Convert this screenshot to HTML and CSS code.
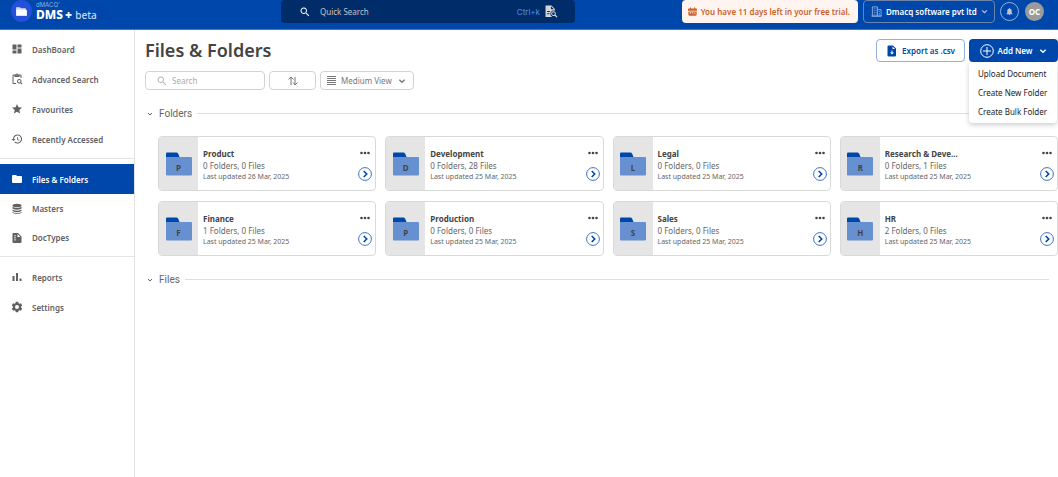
FILE: index.html
```html
<!DOCTYPE html>
<html lang="en">
<head>
  <meta charset="UTF-8">
  <meta name="viewport" content="width=device-width, initial-scale=1.0">
  <title>DMS+ | Files &amp; Folders</title>
  <link rel="stylesheet" href="styles.css">
</head>
<body>
  <svg class="sprite" aria-hidden="true">
    <symbol id="i-search" viewBox="0 0 24 24"><path d="M15.5 14h-.8l-.3-.3A6.5 6.5 0 1 0 13.700 14.400l.3.3v.8l5 5 1.500-1.500zm-6 0a4.500 4.500 0 1 1 0-9 4.500 4.500 0 0 1 0 9z"/></symbol>
    <symbol id="i-folder" viewBox="0 0 24 24"><path d="M10 4H4a2 2 0 0 0-2 2v12a2 2 0 0 0 2 2h16a2 2 0 0 0 2-2V8a2 2 0 0 0-2-2h-8z"/></symbol>
    <symbol id="i-down" viewBox="0 0 24 24"><path d="M4 8l8 8 8-8" fill="none" stroke="currentColor" stroke-width="4"/></symbol>
    <symbol id="i-big-folder" viewBox="0 0 26 24"><path fill="#0047ab" d="M0 1.500Q0 .5 1 .5h9.500Q11.500.5 12 1.500L14 6H0z"/><path fill="#6690d0" d="M0 5h25q1 0 1 1v16.500q0 1-1 1H1q-1 0-1-1z"/></symbol>
    <symbol id="i-go" viewBox="0 0 14 14"><circle cx="7" cy="7" r="6.400" fill="#fff" stroke="#3d72c4"/><path d="M5.700 4l3 3-3 3" fill="none" stroke="#0047ab" stroke-width="1.600"/></symbol>
    <symbol id="i-dots" viewBox="0 0 10 4"><circle cx="1.500" cy="2" r="1.300"/><circle cx="5" cy="2" r="1.300"/><circle cx="8.500" cy="2" r="1.300"/></symbol>
  </svg>

  <header class="topbar">
    <a class="brand" href="#">
      <span class="brand-mark"><svg class="brand-icon" viewBox="0 0 24 24"><path fill="#d5def5" d="M2 4h7l2 2h9v4H2z"/><path d="M2 9h20v11H2z"/></svg></span>
      <span class="brand-text">
        <span class="brand-top">dMACQ&#8217;</span>
        <span class="brand-name">DMS<b>+</b> <small>beta</small></span>
      </span>
    </a>
    <label class="quick">
      <svg class="icon"><use href="#i-search"/></svg>
      <input type="text" placeholder="Quick Search" aria-label="Quick Search">
      <kbd>Ctrl+k</kbd>
      <svg class="doc-search" viewBox="0 0 24 24"><path fill-rule="evenodd" d="M1 1h11l6 6v3.500a6.300 6.300 0 0 0-7.500 9L13 22H1zM11 2.500V8h5.500zM4 11v2h5v-2zm0 4v2h4v-2z"/><path d="M19.500 18.200a4.400 4.400 0 1 0-1.500 1.500l3.500 3.500 1.600-1.600zm-3.800.4a2.500 2.500 0 1 1 0-5 2.500 2.500 0 0 1 0 5z"/></svg>
    </label>
    <div class="account">
      <div class="trial">
        <svg class="icon-xs" viewBox="0 0 24 24"><path fill-rule="evenodd" d="M5 1h3v3h8V1h3v3h3q2 0 2 2v4H0V6q0-2 2-2h3zM1 12h22v8q0 3-3 3H4q-3 0-3-3zm4 2v3h3v-3zm6 0v3h3v-3zm6 1v3h3v-3z"/></svg>
        You have 11 days left in your free trial.
      </div>
      <label class="company">
        <svg class="company-icon line" viewBox="0 0 24 24"><path d="M3 22V2h11v20zM14 8h8v14h-8M6 6h2m2 0h2M6 10h2m2 0h2M6 14h2m2 0h2M6 18h2m2 0h2m5-6h2m-2 4h2m-2 3h2M1 22h22"/></svg>
        <select aria-label="Company"><option>Dmacq software pvt ltd</option></select>
        <svg class="chevron"><use href="#i-down"/></svg>
      </label>
      <button class="bell" aria-label="Notifications"><svg class="icon-xs" viewBox="0 0 24 24"><path d="M12 22a2 2 0 0 0 2-2h-4a2 2 0 0 0 2 2zm6-6v-5c0-3-1.600-5.600-4.500-6.300V4a1.500 1.500 0 0 0-3 0v.7C7.600 5.400 6 8 6 11v5l-2 2v1h16v-1z"/></svg></button>
      <button class="avatar">OC</button>
    </div>
  </header>

  <div class="layout">
    <nav class="sidebar">
      <div class="nav-group">
        <a href="#"><svg class="icon" viewBox="0 0 24 24"><path d="M3 13h8V3H3zm0 8h8v-6H3zm10 0h8V11h-8zm0-18v6h8V3z"/></svg>DashBoard</a>
        <a href="#"><svg class="icon" viewBox="0 0 24 24"><path d="M10 20H5V5h2v3h10V5h2v5h2V5a2 2 0 0 0-2-2h-4.200a3 3 0 0 0-5.600 0H5a2 2 0 0 0-2 2v15a2 2 0 0 0 2 2h5zM12 3a1 1 0 1 1 0 2 1 1 0 0 1 0-2z"/><path d="M20.300 18.900a4.500 4.500 0 1 0-1.400 1.400L21.600 23l1.400-1.400zm-3.800.1a2.500 2.500 0 1 1 0-5 2.500 2.500 0 0 1 0 5z"/></svg>Advanced Search</a>
        <a href="#"><svg class="icon" viewBox="0 0 24 24"><path d="M12 17.300l6.200 3.700-1.600-7L22 9.200l-7.200-.6L12 2 9.200 8.600 2 9.200 7.500 14l-1.700 7z"/></svg>Favourites</a>
        <a href="#"><svg class="icon" viewBox="0 0 24 24"><path d="M13 3a9 9 0 0 0-9 9H1l3.900 3.900.1.100L9 12H6a7 7 0 1 1 2.100 4.900l-1.400 1.400A9 9 0 1 0 13 3zm-1 5v5l4.300 2.500.7-1.200-3.500-2.100V8z"/></svg>Recently Accessed</a>
      </div>
      <div class="nav-group nav-tight">
        <a class="active" href="#"><svg class="icon"><use href="#i-folder"/></svg>Files &amp; Folders</a>
        <a href="#"><svg class="icon" viewBox="0 0 24 24"><ellipse cx="12" cy="5" rx="9" ry="3.500"/><path d="M3 7.500q9 5 18 0v3.500q-9 5-18 0zM3 13q9 5 18 0v3q-9 5-18 0zM3 18q9 5 18 0v1.500q-9 5-18 0z"/></svg>Masters</a>
        <a href="#"><svg class="icon" viewBox="0 0 24 24"><path fill-rule="evenodd" d="M4 2h10l7 7v11a2 2 0 0 1-2 2H5a2 2 0 0 1-2-2V3zm9 2v6h6zM6 7v1.500h4V7zm0 4v1.500h4V11zm0 4v1.500h4V15z"/></svg>DocTypes</a>
      </div>
      <div class="nav-group">
        <a href="#"><svg class="icon" viewBox="0 0 24 24"><path d="M3 10h4v10H3zm7-6h4v16h-4zm7 11h4v5h-4z"/></svg>Reports</a>
        <a href="#"><svg class="icon" viewBox="0 0 24 24"><path fill-rule="evenodd" d="M9.500 1.500h5l.6 3 1.900 1.100 2.900-1 2.500 4.300-2.300 2v2.200l2.300 2-2.500 4.300-2.900-1-1.900 1.100-.6 3h-5l-.6-3L7 18.400l-2.900 1-2.500-4.300 2.300-2v-2.200l-2.300-2 2.500-4.300 2.900 1 1.900-1.100zM12 8a4 4 0 1 0 0 8 4 4 0 0 0 0-8z"/></svg>Settings</a>
      </div>
    </nav>

    <main class="content">
      <div class="page-head">
        <h1>Files &amp; Folders</h1>
        <div class="actions">
          <button class="btn export"><svg class="icon" viewBox="0 0 24 24"><path fill-rule="evenodd" d="M5 1h9l6 6v14a2 2 0 0 1-2 2H5a2 2 0 0 1-2-2V3a2 2 0 0 1 2-2zm8 2v5h5zm-2 8v4H8l4 4 4-4h-3v-4z"/></svg>Export as .csv</button>
          <div class="add">
            <button class="btn add-btn" aria-expanded="true"><svg class="plus" viewBox="0 0 14 14"><circle cx="7" cy="7" r="6.300"/><path d="M7 3v8M3 7h8"/></svg>Add New<svg class="chevron"><use href="#i-down"/></svg></button>
            <div class="menu">
              <button>Upload Document</button>
              <button>Create New Folder</button>
              <button>Create Bulk Folder</button>
            </div>
          </div>
        </div>
      </div>

      <div class="filters">
        <label class="field search"><svg class="icon"><use href="#i-search"/></svg><input type="text" placeholder="Search" aria-label="Search"></label>
        <button class="field sort" aria-label="Sort"><svg class="icon line" viewBox="0 0 24 24"><path d="M8 20V4M3 9l5-5 5 5M16 4v16m-4-5l4 5 5-5"/></svg></button>
        <label class="field view">
          <svg class="list-icon" viewBox="0 0 9 9"><path d="M0 0h9v1H0zm0 2h9v1H0zm0 2h9v1H0zm0 2h9v1H0zm0 2h9v1H0z"/></svg>
          <select aria-label="View"><option>Medium View</option></select>
          <svg class="chevron"><use href="#i-down"/></svg>
        </label>
      </div>

      <h2 class="section"><svg class="caret"><use href="#i-down"/></svg>Folders</h2>
      <div class="grid">
        <article class="card">
          <div class="thumb"><svg><use href="#i-big-folder"/></svg><span>P</span></div>
          <div class="info"><h3>Product</h3><p>0 Folders, 0 Files</p><small>Last updated 26 Mar, 2025</small></div>
          <div class="tools"><button aria-label="More"><svg class="dots"><use href="#i-dots"/></svg></button><button aria-label="Open"><svg class="go"><use href="#i-go"/></svg></button></div>
        </article>
        <article class="card">
          <div class="thumb"><svg><use href="#i-big-folder"/></svg><span>D</span></div>
          <div class="info"><h3>Development</h3><p>0 Folders, 28 Files</p><small>Last updated 25 Mar, 2025</small></div>
          <div class="tools"><button aria-label="More"><svg class="dots"><use href="#i-dots"/></svg></button><button aria-label="Open"><svg class="go"><use href="#i-go"/></svg></button></div>
        </article>
        <article class="card">
          <div class="thumb"><svg><use href="#i-big-folder"/></svg><span>L</span></div>
          <div class="info"><h3>Legal</h3><p>0 Folders, 0 Files</p><small>Last updated 25 Mar, 2025</small></div>
          <div class="tools"><button aria-label="More"><svg class="dots"><use href="#i-dots"/></svg></button><button aria-label="Open"><svg class="go"><use href="#i-go"/></svg></button></div>
        </article>
        <article class="card">
          <div class="thumb"><svg><use href="#i-big-folder"/></svg><span>R</span></div>
          <div class="info"><h3>Research &amp; Deve...</h3><p>0 Folders, 1 Files</p><small>Last updated 25 Mar, 2025</small></div>
          <div class="tools"><button aria-label="More"><svg class="dots"><use href="#i-dots"/></svg></button><button aria-label="Open"><svg class="go"><use href="#i-go"/></svg></button></div>
        </article>
        <article class="card">
          <div class="thumb"><svg><use href="#i-big-folder"/></svg><span>F</span></div>
          <div class="info"><h3>Finance</h3><p>1 Folders, 0 Files</p><small>Last updated 25 Mar, 2025</small></div>
          <div class="tools"><button aria-label="More"><svg class="dots"><use href="#i-dots"/></svg></button><button aria-label="Open"><svg class="go"><use href="#i-go"/></svg></button></div>
        </article>
        <article class="card">
          <div class="thumb"><svg><use href="#i-big-folder"/></svg><span>P</span></div>
          <div class="info"><h3>Production</h3><p>0 Folders, 0 Files</p><small>Last updated 25 Mar, 2025</small></div>
          <div class="tools"><button aria-label="More"><svg class="dots"><use href="#i-dots"/></svg></button><button aria-label="Open"><svg class="go"><use href="#i-go"/></svg></button></div>
        </article>
        <article class="card">
          <div class="thumb"><svg><use href="#i-big-folder"/></svg><span>S</span></div>
          <div class="info"><h3>Sales</h3><p>0 Folders, 0 Files</p><small>Last updated 25 Mar, 2025</small></div>
          <div class="tools"><button aria-label="More"><svg class="dots"><use href="#i-dots"/></svg></button><button aria-label="Open"><svg class="go"><use href="#i-go"/></svg></button></div>
        </article>
        <article class="card">
          <div class="thumb"><svg><use href="#i-big-folder"/></svg><span>H</span></div>
          <div class="info"><h3>HR</h3><p>2 Folders, 0 Files</p><small>Last updated 25 Mar, 2025</small></div>
          <div class="tools"><button aria-label="More"><svg class="dots"><use href="#i-dots"/></svg></button><button aria-label="Open"><svg class="go"><use href="#i-go"/></svg></button></div>
        </article>
      </div>
      <h2 class="section"><svg class="caret"><use href="#i-down"/></svg>Files</h2>
    </main>
  </div>
</body>
</html>
```
FILE: styles.css
```css
* {
  box-sizing: border-box;
}

body {
  margin: 0;
  min-height: 100vh;
  display: flex;
  flex-direction: column;
  font-family: "Noto Sans", sans-serif;
  font-size: 8px;
  color: #444;
  background: #fff;
}

h1, h2, h3, p {
  margin: 0;
}

button, input, select {
  font: inherit;
  color: inherit;
  background: none;
  border: 0;
  padding: 0;
  margin: 0;
  outline: none;
  appearance: none;
}

button {
  cursor: pointer;
}

a {
  color: inherit;
  text-decoration: none;
}

svg {
  fill: currentColor;
  flex: none;
}

.line, .plus {
  fill: none;
  stroke: currentColor;
}

.line {
  stroke-width: 2;
}

.sprite {
  display: none;
}

.icon {
  width: 12px;
  height: 12px;
}

.icon-xs {
  width: 9px;
  height: 9px;
}

.chevron {
  width: 8px;
  height: 8px;
}

/* top bar */
.topbar {
  height: 30px;
  display: grid;
  grid-template-columns: 281px 294px 1fr;
  background: #0047ab;
  border-bottom: 1px solid #3f76c4;
  color: #fff;
}

.brand {
  height: 23px;
  display: flex;
  gap: 4px;
  padding-left: 11px;
}

.brand-mark {
  width: 21px;
  height: 22px;
  display: flex;
  align-items: center;
  justify-content: center;
  border-radius: 50%;
  background: #2550dc;
}

.brand-icon {
  width: 13px;
  height: 13px;
}

.brand-text {
  display: flex;
  flex-direction: column;
}

.brand-top {
  font-family: Inter, sans-serif;
  font-size: 6px;
  line-height: 10px;
  color: #8fb0e0;
}

.brand-name {
  font-size: 12px;
  line-height: 9px;
  font-weight: 800;
}

.brand-name b {
  margin-left: 2px;
}

.brand-name small {
  font-size: 10px;
  font-weight: 500;
  color: #c9d8ee;
}

.quick {
  height: 23px;
  display: flex;
  align-items: center;
  padding: 0 17px 0 18px;
  border-radius: 4px;
  background: #002c69;
}

.quick input {
  flex: 1;
  min-width: 0;
  margin-left: 9px;
}

.quick input::placeholder {
  color: #c3c3c8;
}

.quick kbd {
  font-family: Inter, sans-serif;
  color: #5b8edb;
  margin-right: 5px;
}

.doc-search {
  width: 13px;
  height: 13px;
  color: #d6d6d6;
}

.account {
  height: 23px;
  display: flex;
  align-items: center;
  justify-content: flex-end;
  gap: 5px;
  padding-right: 14px;
}

.trial {
  height: 23px;
  display: flex;
  align-items: center;
  gap: 4px;
  padding: 0 8px 0 6px;
  border-radius: 4px;
  background: #fff4f0;
  color: #c9622b;
  font-weight: 600;
  white-space: nowrap;
}

.company {
  height: 23px;
  display: flex;
  align-items: center;
  gap: 4px;
  padding: 0 6px 0 7px;
  border: 1px solid #6d83aa;
  border-radius: 4px;
  font-weight: 600;
}

.company-icon {
  width: 11px;
  height: 11px;
  color: #8fb0e0;
}

.company .chevron {
  width: 7px;
  height: 7px;
  color: #b9c6dc;
}

.bell, .avatar {
  display: flex;
  align-items: center;
  justify-content: center;
  width: 19px;
  height: 19px;
  border-radius: 50%;
}

.bell {
  border: 1px solid #8fb0e0;
  color: #c3c3c8;
}

.avatar {
  margin-left: 1px;
  background: #9b9b9b;
  font-weight: 700;
}

/* sidebar */
.layout {
  flex: 1;
  display: grid;
  grid-template-columns: 135px 1fr;
}

.sidebar {
  border-right: 1px solid #e2e2e2;
  padding-top: 4px;
  color: #5f6165;
  font-weight: 600;
}

.nav-group a {
  height: 30px;
  display: flex;
  align-items: center;
  gap: 9px;
  padding-left: 11px;
}

.nav-group + .nav-group {
  margin-top: 4px;
  padding-top: 5px;
  border-top: 1px solid #e4e4e4;
}

.nav-tight a {
  height: 29px;
}

.nav-tight .active {
  height: 30px;
  background: #0047ab;
  color: #fff;
}

/* content */
.content {
  min-width: 0;
  padding: 9px 0 0 10px;
}

.page-head {
  display: flex;
  justify-content: space-between;
}

.page-head h1 {
  font-size: 18px;
  line-height: 23px;
  font-weight: 600;
  color: #444;
}

.actions {
  display: flex;
  gap: 4px;
}

.btn {
  width: 89px;
  height: 23px;
  display: flex;
  align-items: center;
  justify-content: center;
  border-radius: 4px;
  font-weight: 600;
  white-space: nowrap;
}

.export {
  gap: 4px;
  border: 1px solid #8fb0e0;
  color: #0047ab;
}

.add {
  position: relative;
}

.add-btn {
  gap: 4px;
  background: #0047ab;
  color: #fff;
}

.add-btn .chevron {
  margin-left: 3px;
}

.plus {
  width: 14px;
  height: 14px;
}

.menu {
  position: absolute;
  top: 100%;
  right: 1px;
  width: 88px;
  padding: 2px 0;
  border-radius: 0 0 4px 4px;
  background: #fff;
  box-shadow: 0 2px 5px rgba(0, 0, 0, 0.2);
}

.menu button {
  display: block;
  width: 100%;
  height: 19px;
  padding-left: 9px;
  text-align: left;
  color: #222;
  white-space: nowrap;
}

.filters {
  display: flex;
  gap: 4px;
  margin-top: 9px;
}

.field {
  height: 19px;
  display: flex;
  align-items: center;
  border: 1px solid #d2d2d2;
  border-radius: 4px;
  color: #777;
}

.search {
  width: 120px;
  padding-left: 10px;
  gap: 4px;
}

.search .icon {
  color: #b5b5b5;
}

.search input {
  min-width: 0;
  flex: 1;
}

.search input::placeholder {
  color: #aaa;
}

.sort {
  width: 47px;
  justify-content: center;
}

.view {
  gap: 5px;
  padding: 0 7px 0 6px;
}

.view .chevron {
  margin-left: 1px;
}

.list-icon {
  width: 9px;
  height: 9px;
}

.section {
  display: flex;
  align-items: center;
  margin: 17px 9px 0 2px;
  font-family: Roboto, sans-serif;
  font-size: 10px;
  line-height: 13px;
  font-weight: 400;
  color: #666;
}

.section::after {
  content: "";
  flex: 1;
  height: 1px;
  margin-left: 5px;
  background: #dedede;
}

.caret {
  width: 6px;
  height: 6px;
  margin-right: 6px;
}

.grid {
  display: grid;
  grid-template-columns: repeat(4, 1fr);
  gap: 10px 9px;
  margin: 16px 0 0 13px;
}

.card {
  min-width: 0;
  height: 55px;
  display: flex;
  border: 1px solid #d9d9d9;
  border-radius: 4px;
  overflow: hidden;
}

.thumb {
  width: 39px;
  display: grid;
  place-items: center;
  background: #e5e5e5;
}

.thumb svg, .thumb span {
  grid-area: 1 / 1;
}

.thumb svg {
  width: 26px;
  height: 24px;
}

.thumb span {
  padding-top: 8px;
  font-weight: 700;
}

.info {
  flex: 1;
  min-width: 0;
  padding: 10px 0 0 5px;
  color: #666;
  white-space: nowrap;
}

.info h3 {
  font-size: 8px;
  line-height: 13px;
  color: #444;
}

.info p {
  line-height: 12px;
}

.info small {
  display: block;
  font-size: 7px;
  line-height: 9px;
}

.tools {
  display: flex;
  flex-direction: column;
  align-items: center;
  gap: 12px;
  padding: 14px 3px 0 0;
}

.tools button {
  display: flex;
}

.dots {
  width: 10px;
  height: 4px;
}

.go {
  width: 14px;
  height: 14px;
}
```
